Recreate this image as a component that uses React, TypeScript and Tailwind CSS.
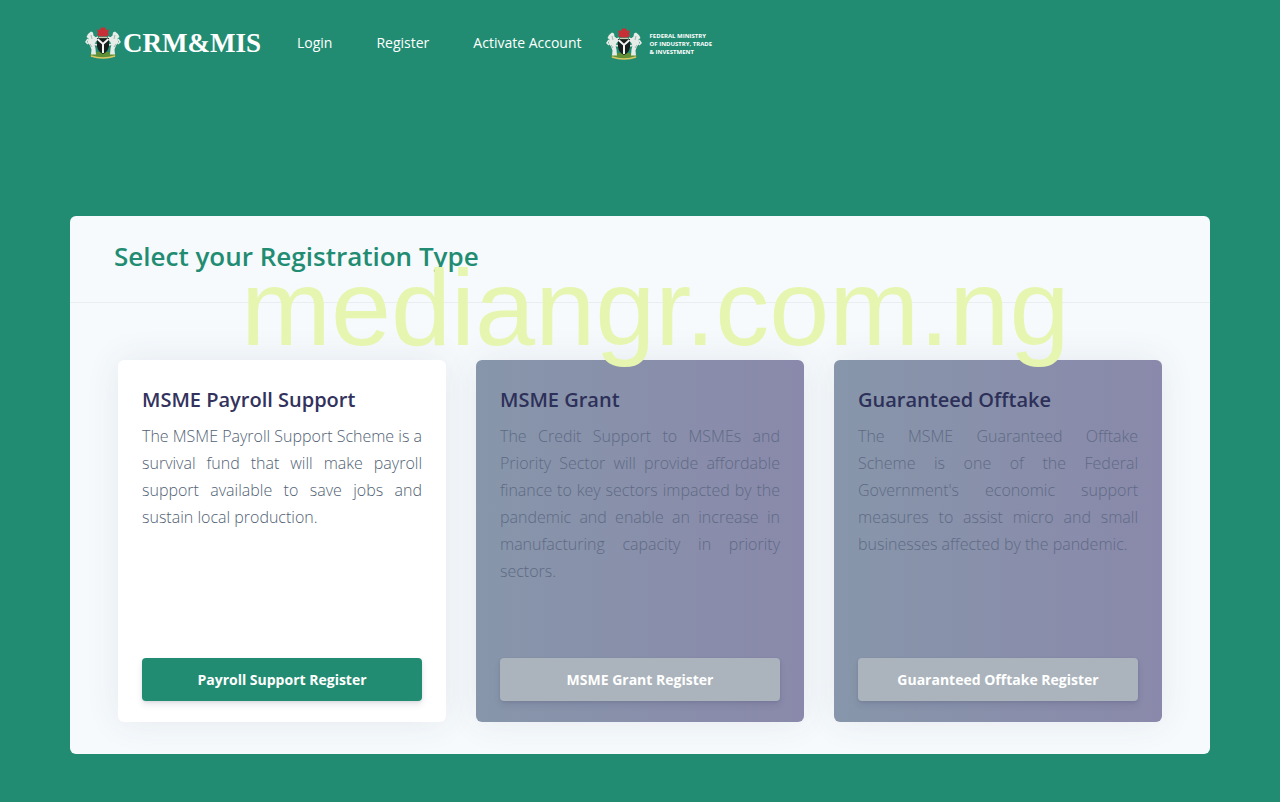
import React from "react";

const supporter =
  "M1.500 10l1.500-3 3-2.500 2 1 .5 3 3 2.500 1 2-1.500 1.500-1.500 3 1 4 .5 6H6l.5-5-1.500-4-2.500-3 1-4z";

function Supporter() {
  return (
    <>
      <path d={supporter} fill="#e6ece7" />
      <path d="M9 12l4-2M8 17l4 1M3 12l-2 3 2 2" stroke="#e6ece7" strokeWidth="1.500" fill="none" />
      <path d="M6 8l1 4M5 17l2 3" stroke="#8fa79c" strokeWidth=".8" fill="none" />
    </>
  );
}

function CoatOfArms() {
  return (
    <svg viewBox="0 0 36 32" className="h-8 w-9 shrink-0" aria-hidden="true">
      <ellipse cx="18" cy="28" rx="13" ry="3.200" fill="#5f8f36" />
      <path d="M6 29q12 4 24 0" stroke="#d9c765" strokeWidth="1.500" fill="none" />
      <Supporter />
      <g transform="translate(36 0) scale(-1 1)">
        <Supporter />
      </g>
      <path d="M12 11h12v8q-1 6-6 8-5-2-6-8z" fill="#17201d" />
      <path d="M12.500 12l5.500 5 5.500-5M18 17v9" stroke="#f3f5f3" strokeWidth="2" fill="none" />
      <path d="M12 2.500l3 .5 1-2.500h4l1 2.500 3-.5-1 3.500 1 2-3 1.500h-6l-3-1.500 1-2z" fill="#c62f35" />
      <path d="M14 10.500h8" stroke="#c9cfae" strokeWidth="1.200" />
    </svg>
  );
}

const schemes = [
  {
    title: "MSME Payroll Support",
    text: "The MSME Payroll Support Scheme is a survival fund that will make payroll support available to save jobs and sustain local production.",
    action: "Payroll Support Register",
    open: true,
  },
  {
    title: "MSME Grant",
    text: "The Credit Support to MSMEs and Priority Sector will provide affordable finance to key sectors impacted by the pandemic and enable an increase in manufacturing capacity in priority sectors.",
    action: "MSME Grant Register",
    open: false,
  },
  {
    title: "Guaranteed Offtake",
    text: "The MSME Guaranteed Offtake Scheme is one of the Federal Government's economic support measures to assist micro and small businesses affected by the pandemic.",
    action: "Guaranteed Offtake Register",
    open: false,
  },
];

export default function App() {
  return (
    <div className="min-h-screen bg-[#228c72] pb-12 font-['Open_Sans',sans-serif]">
      <header className="mx-auto flex h-[86px] max-w-[1140px] items-center px-[15px]">
        <a href="#home" className="flex items-center gap-0.5 text-white">
          <CoatOfArms />
          <span className="font-['Liberation_Serif',serif] text-[27px] leading-8 font-bold">CRM&amp;MIS</span>
        </a>
        <nav className="ml-9 flex items-center gap-11 text-sm text-white">
          <a href="#login">Login</a>
          <a href="#register">Register</a>
          <a href="#activate">Activate Account</a>
        </nav>
        <a href="#ministry" className="ml-6 flex items-center gap-2 pt-0.5 text-white">
          <CoatOfArms />
          <span className="text-[6px] leading-2 font-bold">
            FEDERAL MINISTRY
            <br />
            OF INDUSTRY, TRADE
            <br />
            &amp; INVESTMENT
          </span>
        </a>
      </header>

      <main className="relative mx-auto mt-[130px] max-w-[1140px] rounded-md bg-[#f6fafd]">
        <div className="border-b border-[#e9eef3] px-11 pt-5 pb-[26px]">
          <h1 className="text-[26px] leading-10 font-semibold text-[#228c72]">Select your Registration Type</h1>
        </div>
        <div className="grid grid-cols-3 gap-[30px] px-12 pt-[57px] pb-8">
          {schemes.map((s) => (
            <section
              key={s.title}
              className={`flex min-h-[362px] flex-col rounded-md px-6 pt-6 pb-[21px] shadow-[0_0_35px_rgba(60,70,80,0.09)] ${
                s.open ? "bg-white" : "bg-linear-to-r from-[#8796aa] to-[#8a89ab]"
              }`}
            >
              <h2 className={`text-xl leading-8 font-semibold ${s.open ? "text-[#32325d]" : "text-[#2d3059]"}`}>{s.title}</h2>
              <p className={`mt-[7px] text-justify leading-[27px] font-light ${s.open ? "text-[#525f74]" : "text-[#5e6a84]"}`}>
                {s.text}
              </p>
              <button
                type="button"
                disabled={!s.open}
                className={`mt-auto h-[43px] w-full rounded text-sm font-bold text-white shadow-[0_4px_6px_rgba(50,50,93,0.11),0_1px_3px_rgba(0,0,0,0.08)] ${
                  s.open ? "bg-[#228c72]" : "bg-[#abb4bc]"
                }`}
              >
                {s.action}
              </button>
            </section>
          ))}
        </div>
        <div className="pointer-events-none absolute top-[30px] left-[171px] font-['Liberation_Sans',sans-serif] text-[108px] leading-[124px] whitespace-nowrap text-[#e6f6b0]">
          mediangr.com.ng
        </div>
      </main>
    </div>
  );
}
